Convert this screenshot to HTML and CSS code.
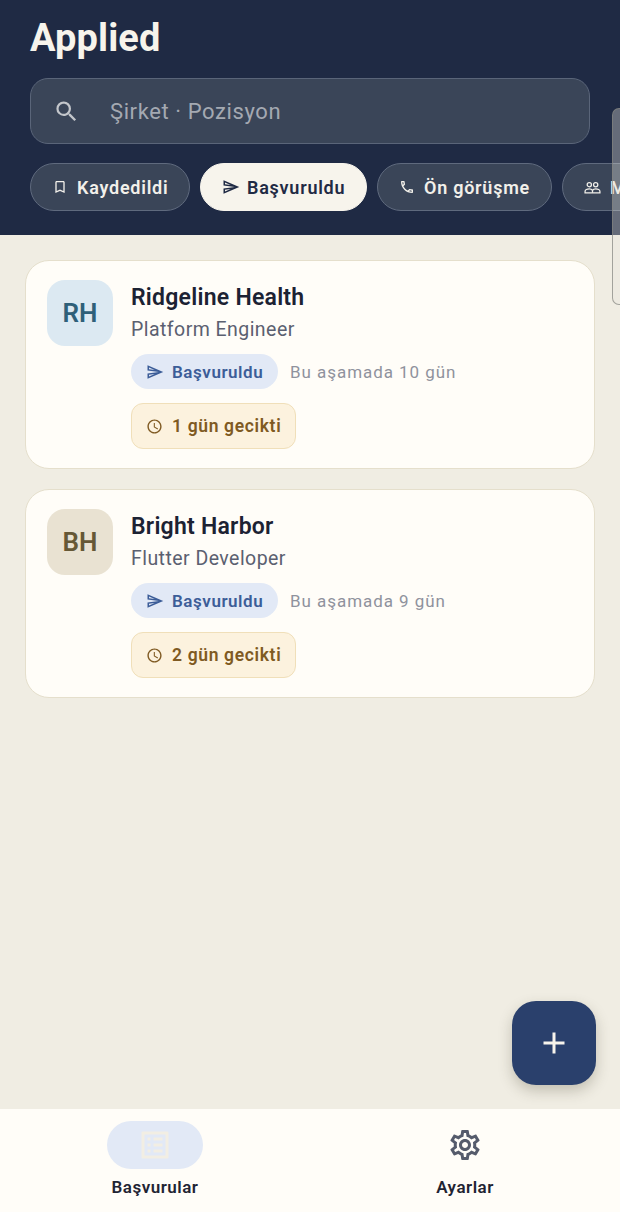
FILE: index.html
```html
<!DOCTYPE html>
<html lang="tr">
<head>
<meta charset="utf-8">
<title>Applied</title>
<link rel="stylesheet" href="styles.css">
</head>
<body>
<div class="app">
  <header class="top">
    <h1 class="title">Applied</h1>
    <div class="search">
      <svg class="search-icon" viewBox="0 0 24 24"><path d="M15.5 14h-.79l-.28-.27A6.47 6.47 0 0 0 16 9.5 6.5 6.5 0 1 0 9.5 16c1.61 0 3.09-.59 4.23-1.57l.27.28v.79l5 4.99L20.49 19l-4.99-5zm-6 0C7.01 14 5 11.99 5 9.5S7.01 5 9.5 5 14 7.01 14 9.5 11.99 14 9.5 14z"/></svg>
      <span class="search-text">Şirket · Pozisyon</span>
    </div>
    <div class="chips">
      <div class="chip chip-a">
        <svg class="chip-icon" viewBox="0 0 24 24"><path d="M17 3H7c-1.1 0-2 .9-2 2v16l7-3 7 3V5c0-1.1-.9-2-2-2zm0 15-5-2.18L7 18V5h10v13z"/></svg>
        <span>Kaydedildi</span>
      </div>
      <div class="chip chip-on chip-b">
        <svg class="chip-icon" viewBox="0 0 24 24"><path d="M4.01 6.03l7.51 3.22-7.52-1 .01-2.22m7.5 8.72L4 17.97v-2.22l7.51-1M2.01 3 2 10l15 2-15 2 .01 7L23 12 2.01 3z"/></svg>
        <span>Başvuruldu</span>
      </div>
      <div class="chip chip-c">
        <svg class="chip-icon" viewBox="0 0 24 24"><path d="M6.54 5c.06.89.21 1.76.45 2.59l-1.2 1.2c-.41-1.2-.67-2.47-.76-3.79h1.51m9.86 12.02c.85.24 1.72.39 2.6.45v1.49c-1.32-.09-2.59-.35-3.8-.75l1.2-1.19M7.5 3H4c-.55 0-1 .45-1 1 0 9.39 7.61 17 17 17 .55 0 1-.45 1-1v-3.49c0-.55-.45-1-1-1-1.24 0-2.45-.2-3.57-.57-.1-.04-.21-.05-.31-.05-.26 0-.51.1-.71.29l-2.2 2.2c-2.83-1.45-5.15-3.76-6.59-6.59l2.2-2.2c.28-.28.36-.67.25-1.02C8.7 6.45 8.5 5.25 8.5 4c0-.55-.45-1-1-1z"/></svg>
        <span>Ön görüşme</span>
      </div>
      <div class="chip chip-d">
        <svg class="chip-icon-line" viewBox="0 0 24 24"><circle cx="7.5" cy="8" r="3"/><circle cx="16.500" cy="8" r="3"/><path d="M1.500 19.500h21v-2c0-2-3-3.500-6-3.500-1.900 0-3.600.8-4.500 1.900C11.100 14.800 9.400 14 7.500 14c-3 0-6 1.500-6 3.500z"/><path d="M12 16v3.500"/></svg>
        <span>Mülakat</span>
      </div>
    </div>
  </header>
  <div class="scrollthumb"></div>

  <main class="list">
    <article class="card">
      <div class="avatar avatar-blue">RH</div>
      <div class="info">
        <div class="name">Ridgeline Health</div>
        <div class="role">Platform Engineer</div>
        <div class="status-row">
          <div class="status">
            <svg class="status-icon" viewBox="0 0 24 24"><path d="M4.01 6.03l7.51 3.22-7.52-1 .01-2.22m7.5 8.72L4 17.97v-2.22l7.51-1M2.01 3 2 10l15 2-15 2 .01 7L23 12 2.01 3z"/></svg>
            <span>Başvuruldu</span>
          </div>
          <span class="days">Bu aşamada 10 gün</span>
        </div>
        <div class="late">
          <svg class="late-icon" viewBox="0 0 24 24"><path d="M11.99 2C6.47 2 2 6.48 2 12s4.47 10 9.99 10C17.52 22 22 17.520 22 12S17.520 2 11.990 2zM12 20c-4.420 0-8-3.580-8-8s3.580-8 8-8 8 3.580 8 8-3.580 8-8 8zm.5-13H11v6l5.250 3.150.75-1.230-4.500-2.670z"/></svg>
          <span>1 gün gecikti</span>
        </div>
      </div>
    </article>

    <article class="card">
      <div class="avatar avatar-sand">BH</div>
      <div class="info">
        <div class="name">Bright Harbor</div>
        <div class="role">Flutter Developer</div>
        <div class="status-row">
          <div class="status">
            <svg class="status-icon" viewBox="0 0 24 24"><path d="M4.01 6.03l7.51 3.22-7.52-1 .01-2.22m7.5 8.72L4 17.97v-2.22l7.51-1M2.01 3 2 10l15 2-15 2 .01 7L23 12 2.01 3z"/></svg>
            <span>Başvuruldu</span>
          </div>
          <span class="days">Bu aşamada 9 gün</span>
        </div>
        <div class="late">
          <svg class="late-icon" viewBox="0 0 24 24"><path d="M11.99 2C6.47 2 2 6.48 2 12s4.47 10 9.99 10C17.52 22 22 17.520 22 12S17.520 2 11.990 2zM12 20c-4.420 0-8-3.580-8-8s3.580-8 8-8 8 3.580 8 8-3.580 8-8 8zm.5-13H11v6l5.250 3.150.75-1.230-4.500-2.670z"/></svg>
          <span>2 gün gecikti</span>
        </div>
      </div>
    </article>
  </main>

  <button class="fab" type="button" aria-label="Ekle">
    <svg class="fab-icon" viewBox="0 0 24 24"><path d="M19 13h-6v6h-2v-6H5v-2h6V5h2v6h6v2z"/></svg>
  </button>

  <nav class="nav">
    <div class="nav-item">
      <div class="nav-pill">
        <svg class="nav-icon nav-icon-on" viewBox="0 0 24 24"><path d="M19 5v14H5V5h14m1.100-2H3.900c-.5 0-.9.400-.9.900v16.200c0 .400.400.900.900.900h16.200c.400 0 .900-.500.900-.900V3.900c0-.500-.500-.900-.900-.900zM11 7h6v2h-6V7zm0 4h6v2h-6v-2zm0 4h6v2h-6v-2zM7 7h2v2H7V7zm0 4h2v2H7v-2zm0 4h2v2H7v-2z"/></svg>
      </div>
      <span class="nav-label">Başvurular</span>
    </div>
    <div class="nav-item">
      <div class="nav-pill nav-pill-off">
        <svg class="nav-icon" viewBox="0 0 24 24"><path d="M19.430 12.980c.040-.320.070-.640.070-.980 0-.340-.030-.660-.070-.980l2.110-1.650c.190-.150.240-.420.120-.640l-2-3.460c-.090-.160-.260-.250-.440-.250-.060 0-.120.010-.170.030l-2.490 1c-.520-.400-1.080-.730-1.690-.980l-.380-2.650C14.460 2.180 14.250 2 14 2h-4c-.250 0-.460.180-.490.420l-.380 2.650c-.610.250-1.170.590-1.690.980l-2.490-1c-.060-.020-.120-.030-.180-.030-.170 0-.340.090-.430.250l-2 3.460c-.130.220-.070.490.120.640l2.110 1.650c-.040.320-.070.650-.070.980 0 .330.030.660.070.980l-2.110 1.650c-.190.150-.240.420-.120.640l2 3.460c.090.160.260.250.440.250.060 0 .120-.010.170-.030l2.490-1c.520.400 1.080.730 1.690.980l.380 2.650c.030.240.240.420.490.420h4c.250 0 .460-.180.490-.420l.380-2.650c.610-.250 1.170-.590 1.690-.980l2.490 1c.060.020.120.030.180.030.170 0 .340-.090.430-.250l2-3.460c.120-.220.070-.490-.120-.640l-2.110-1.650zm-1.980-1.710c.040.310.050.520.050.730 0 .210-.020.430-.050.730l-.140 1.130.890.700 1.080.840-.700 1.210-1.270-.510-1.040-.420-.900.680c-.430.320-.840.560-1.250.730l-1.060.430-.160 1.130-.200 1.350h-1.400l-.190-1.350-.160-1.130-1.060-.430c-.430-.180-.830-.410-1.230-.710l-.910-.700-1.060.430-1.270.510-.700-1.210 1.080-.84.890-.700-.140-1.130c-.030-.310-.050-.540-.050-.740s.020-.430.050-.730l.140-1.130-.890-.700-1.080-.84.700-1.210 1.270.510 1.040.420.900-.680c.430-.320.840-.560 1.250-.730l1.060-.43.160-1.130.200-1.350h1.390l.190 1.350.160 1.130 1.060.43c.430.180.830.41 1.230.710l.91.700 1.060-.43 1.270-.51.700 1.210-1.070.85-.89.700.14 1.130zM12 8c-2.210 0-4 1.790-4 4s1.790 4 4 4 4-1.790 4-4-1.790-4-4-4zm0 6c-1.100 0-2-.9-2-2s.9-2 2-2 2 .9 2 2-.9 2-2 2z"/></svg>
      </div>
      <span class="nav-label">Ayarlar</span>
    </div>
  </nav>
</div>
</body>
</html>
```
FILE: styles.css
```css
* { box-sizing: border-box; }
html, body { margin: 0; padding: 0; }
body { font-family: Roboto, "Noto Sans", sans-serif; background: #f0ede3; }

.app {
  position: relative;
  width: 620px;
  height: 1212px;
  overflow: hidden;
  display: flex;
  flex-direction: column;
  background: #f0ede3;
}

.top {
  height: 235px;
  flex: none;
  padding: 16px 0 0 30px;
  background: #1f2a44;
  overflow: hidden;
}
.title {
  margin: 0;
  height: 44px;
  font-size: 38px;
  line-height: 44px;
  font-weight: 700;
  letter-spacing: 0.1px;
  color: #f7f4ec;
}
.search {
  margin-top: 18px;
  width: 560px;
  height: 66px;
  display: flex;
  align-items: center;
  padding-left: 22px;
  border-radius: 18px;
  background: #3a4558;
  border: 1.5px solid #5a6579;
}
.search-icon { width: 27px; height: 27px; fill: #c3c6cb; flex: none; }
.search-text {
  margin-left: 30px;
  font-size: 22px;
  letter-spacing: 0.6px;
  color: #a4a9b2;
}

.chips { margin-top: 19px; display: flex; gap: 10px; width: 700px; }
.chip {
  flex: none;
  height: 48px;
  display: flex;
  align-items: center;
  padding-left: 21px;
  gap: 9px;
  border-radius: 24px;
  background: #3a4558;
  border: 1.5px solid #5f6a7e;
  color: #f2f0ea;
  font-size: 18px;
  font-weight: 600;
  letter-spacing: 0.75px;
}
.chip-a { width: 160px; }
.chip-b { width: 167px; gap: 7px; }
.chip-c { width: 175px; }
.chip-d { width: 130px; }
.chip-icon { width: 16px; height: 16px; fill: currentColor; flex: none; }
.chip-icon-line {
  width: 17px;
  height: 17px;
  flex: none;
  fill: none;
  stroke: currentColor;
  stroke-width: 1.8;
}
.chip-b .chip-icon { width: 18px; height: 18px; }
.chip-on { background: #f7f4ec; border-color: #f7f4ec; color: #1f2a44; }

.scrollthumb {
  position: absolute;
  left: 612px;
  top: 108px;
  width: 14px;
  height: 197px;
  border-radius: 7px;
  background: rgba(232, 230, 222, 0.35);
  border: 1.5px solid rgba(130, 130, 126, 0.7);
}

.list {
  flex: 1;
  padding: 25px 25px 0;
  display: flex;
  flex-direction: column;
  gap: 20px;
}
.card {
  height: 209px;
  display: flex;
  padding: 19px 21px;
  gap: 18px;
  border-radius: 24px;
  background: #fffdf8;
  border: 1.5px solid #e5dfcc;
}
.avatar {
  flex: none;
  width: 66px;
  height: 66px;
  display: flex;
  align-items: center;
  justify-content: center;
  border-radius: 18px;
  font-size: 26px;
  font-weight: 600;
}
.avatar-blue { background: #dce9f2; color: #2f6079; }
.avatar-sand { background: #e9e2d2; color: #665836; }

.info { flex: 1; min-width: 0; padding-top: 2px; }
.name { font-size: 23px; line-height: 32px; font-weight: 600; letter-spacing: 0.25px; color: #1c2233; }
.role { margin-top: 3px; font-size: 19.500px; line-height: 26px; letter-spacing: 0.45px; color: #5b6070; }
.status-row { margin-top: 11px; display: flex; align-items: center; gap: 12px; }
.status {
  width: 147px;
  height: 35px;
  display: flex;
  align-items: center;
  padding-left: 15px;
  gap: 8px;
  border-radius: 18px;
  background: #e2e9f6;
  color: #3c5d98;
  font-size: 17px;
  font-weight: 600;
  letter-spacing: 0.55px;
}
.status-icon { width: 18px; height: 18px; fill: currentColor; flex: none; }
.days { font-size: 17px; letter-spacing: 0.95px; color: #8f929d; }
.late {
  margin-top: 14px;
  width: 165px;
  height: 46px;
  display: flex;
  align-items: center;
  padding-left: 14px;
  gap: 9px;
  border-radius: 12px;
  background: #fcf2de;
  border: 1.5px solid #f0dfb9;
  color: #7f5a22;
  font-size: 17.500px;
  font-weight: 600;
  letter-spacing: 0.65px;
}
.late-icon { width: 17px; height: 17px; fill: currentColor; flex: none; }

.fab {
  position: absolute;
  left: 512px;
  top: 1001px;
  width: 84px;
  height: 84px;
  padding: 0;
  border: 0;
  border-radius: 24px;
  background: #2a406c;
  box-shadow: 0 6px 14px rgba(60, 55, 35, 0.25);
  display: flex;
  align-items: center;
  justify-content: center;
}
.fab-icon { width: 36px; height: 36px; fill: #f7f4ec; }

.nav {
  flex: none;
  height: 103px;
  display: flex;
  background: #fffdf8;
}
.nav-item {
  flex: 1;
  display: flex;
  flex-direction: column;
  align-items: center;
  padding-top: 12px;
}
.nav-pill {
  width: 96px;
  height: 48px;
  display: flex;
  align-items: center;
  justify-content: center;
  border-radius: 24px;
  background: #e2e9f6;
}
.nav-pill-off { background: transparent; }
.nav-icon { width: 36px; height: 36px; fill: #555b6b; }
.nav-icon-on { fill: #f2eee3; }
.nav-label {
  margin-top: 7px;
  font-size: 17px;
  line-height: 22px;
  font-weight: 600;
  letter-spacing: 0.5px;
  color: #1f2433;
}
```
